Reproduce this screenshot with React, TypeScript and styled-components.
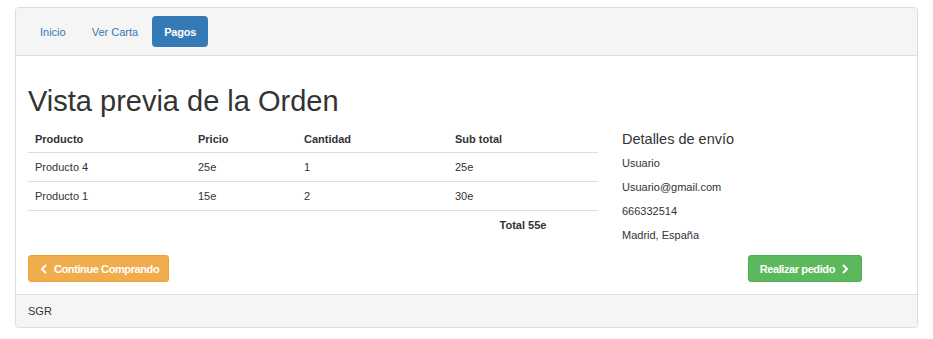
import React from "react";
import styled, { createGlobalStyle } from "styled-components";

const GlobalStyle = createGlobalStyle`
    body {
        margin: 0;
        background: #fff;
        font-family: "Liberation Sans", Arial, sans-serif;
        font-size: 11px;
        color: #333;
    }
`;

const Page = styled.div`
    padding: 7px 15px 0 15px;
`;

const Panel = styled.div`
    border: 1px solid #ddd;
    border-radius: 4px;
    box-shadow: 0 1px 1px rgba(0, 0, 0, 0.05);
    overflow: hidden;
`;

const PanelHeading = styled.div`
    background: #f5f5f5;
    border-bottom: 1px solid #ddd;
    padding: 8px 12px 8px 12px;
`;

const Pills = styled.ul`
    display: flex;
    gap: 2px;
    list-style: none;
    margin: 0;
    padding: 0;
`;

const Pill = styled.li<{ $active?: boolean }>`
    height: 31px;
    display: flex;
    align-items: center;
    padding: 0 12px 0 12px;
    border-radius: 4px;
    color: ${({ $active }) => ($active ? "#fff" : "#337ab7")};
    background: ${({ $active }) => ($active ? "#337ab7" : "transparent")};
    font-weight: ${({ $active }) => ($active ? 700 : 400)};
    letter-spacing: ${({ $active }) => ($active ? "-0.2px" : "0")};
    cursor: pointer;
`;

const PanelBody = styled.div`
    padding: 12px 12px 12px 12px;
`;

const Title = styled.h1`
    font-size: 29px;
    font-weight: 400;
    line-height: 34px;
    margin: 16px 0 8px 0;
`;

const Row = styled.div`
    display: grid;
    grid-template-columns: 570px 1fr;
    column-gap: 24px;
    align-items: start;
`;

const Table = styled.table`
    width: 100%;
    border-collapse: collapse;

    th,
    td {
        text-align: left;
        padding: 6px 7px;
        line-height: 16px;
    }

    th {
        padding: 5px 7px;
        font-weight: 700;
        border-bottom: 1px solid #ddd;
    }

    tbody td {
        border-bottom: 1px solid #ddd;
    }
`;

const TotalCell = styled.td`
    text-align: center !important;
    font-weight: 700;
`;

const Details = styled.div`
    padding-top: 2px;
`;

const DetailsTitle = styled.h4`
    font-size: 14.5px;
    font-weight: 400;
    margin: 0 0 1px 0;
    line-height: 22px;
`;

const DetailLine = styled.p`
    margin: 0;
    line-height: 24px;
`;

const Actions = styled.div`
    display: flex;
    justify-content: space-between;
    padding: 8px 43px 0 0;
`;

const Button = styled.button<{ $tone: "warning" | "success" }>`
    display: inline-flex;
    align-items: center;
    gap: 6px;
    height: 27px;
    padding: ${({ $tone }) => ($tone === "warning" ? "0 9px 0 11px" : "0 12px 0 11px")};
    border-radius: 3px;
    font-family: inherit;
    font-size: 11px;
    font-weight: 700;
    letter-spacing: -0.4px;
    color: #fff;
    cursor: pointer;
    background: ${({ $tone }) => ($tone === "warning" ? "#f0ad4e" : "#5cb85c")};
    border: 1px solid ${({ $tone }) => ($tone === "warning" ? "#eea236" : "#4cae4c")};
`;

const PanelFooter = styled.div`
    background: #f5f5f5;
    border-top: 1px solid #ddd;
    padding: 0 12px;
    height: 32px;
    display: flex;
    align-items: center;
`;

const Chevron = ({ dir }: { dir: "left" | "right" }) => (
    <svg width="8" height="10" viewBox="0 0 8 10">
        <path
            d={dir === "left" ? "M6 1 L2 5 L6 9" : "M2 1 L6 5 L2 9"}
            fill="none"
            stroke="#fff"
            strokeWidth="2"
        />
    </svg>
);

const items = [
    { name: "Producto 4", price: "25e", qty: 1, sub: "25e" },
    { name: "Producto 1", price: "15e", qty: 2, sub: "30e" },
];

export default function App() {
    return (
        <Page>
            <GlobalStyle />
            <Panel>
                <PanelHeading>
                    <Pills>
                        <Pill>Inicio</Pill>
                        <Pill>Ver Carta</Pill>
                        <Pill $active>Pagos</Pill>
                    </Pills>
                </PanelHeading>
                <PanelBody>
                    <Title>Vista previa de la Orden</Title>
                    <Row>
                        <Table>
                            <colgroup>
                                <col style={{ width: 163 }} />
                                <col style={{ width: 106 }} />
                                <col style={{ width: 151 }} />
                                <col style={{ width: 150 }} />
                            </colgroup>
                            <thead>
                                <tr>
                                    <th>Producto</th>
                                    <th>Pricio</th>
                                    <th>Cantidad</th>
                                    <th>Sub total</th>
                                </tr>
                            </thead>
                            <tbody>
                                {items.map((it) => (
                                    <tr key={it.name}>
                                        <td>{it.name}</td>
                                        <td>{it.price}</td>
                                        <td>{it.qty}</td>
                                        <td>{it.sub}</td>
                                    </tr>
                                ))}
                            </tbody>
                            <tfoot>
                                <tr>
                                    <td />
                                    <td />
                                    <td />
                                    <TotalCell>Total 55e</TotalCell>
                                </tr>
                            </tfoot>
                        </Table>
                        <Details>
                            <DetailsTitle>Detalles de envío</DetailsTitle>
                            <DetailLine>Usuario</DetailLine>
                            <DetailLine>Usuario@gmail.com</DetailLine>
                            <DetailLine>666332514</DetailLine>
                            <DetailLine>Madrid, España</DetailLine>
                        </Details>
                    </Row>
                    <Actions>
                        <Button $tone="warning">
                            <Chevron dir="left" /> Continue Comprando
                        </Button>
                        <Button $tone="success">
                            Realizar pedido <Chevron dir="right" />
                        </Button>
                    </Actions>
                </PanelBody>
                <PanelFooter>SGR</PanelFooter>
            </Panel>
        </Page>
    );
}
